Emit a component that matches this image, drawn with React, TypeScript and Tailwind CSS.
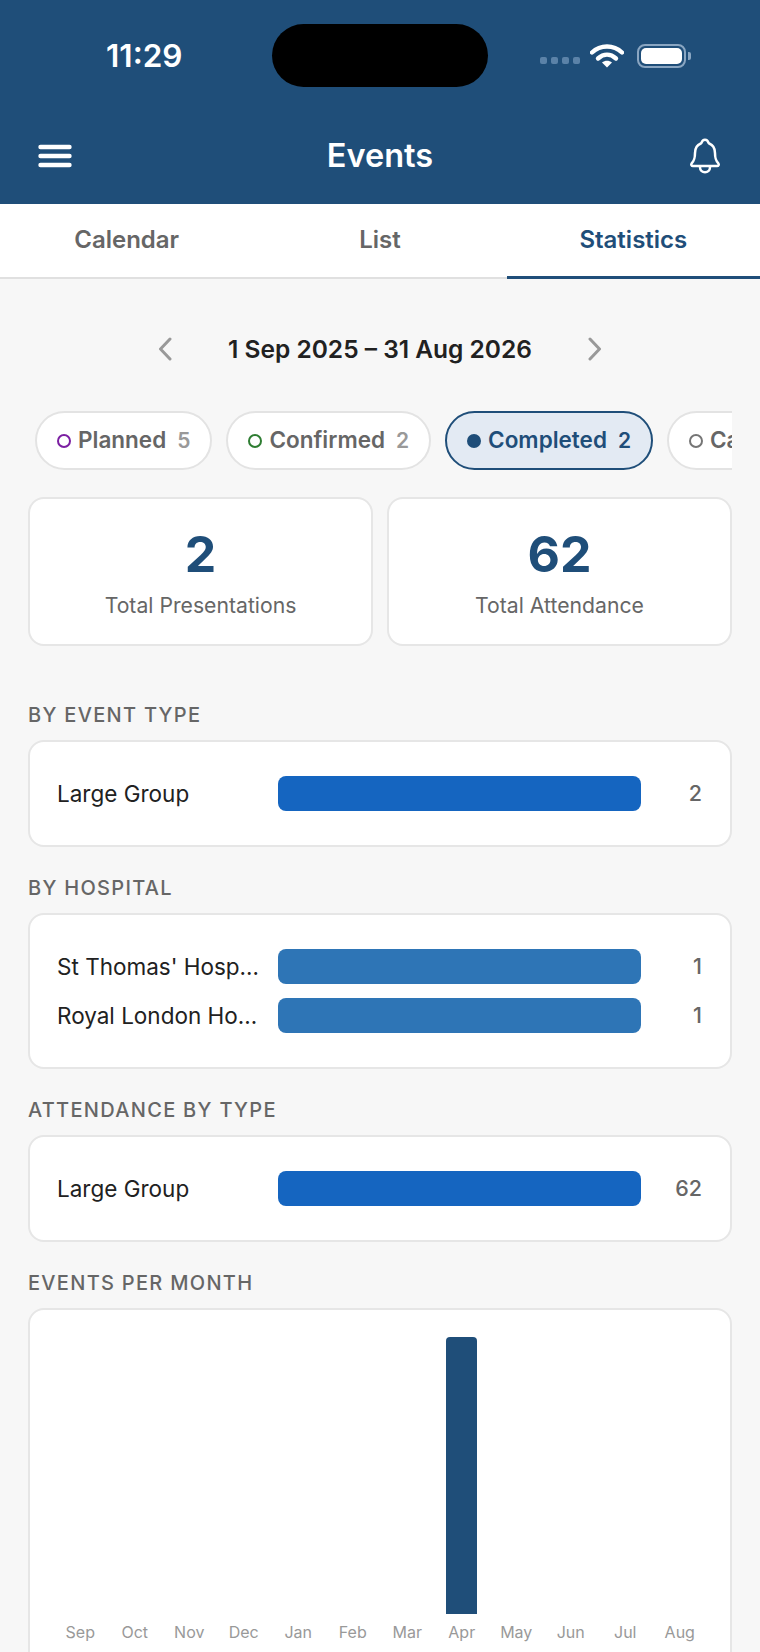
import { IoNotificationsOutline } from "react-icons/io5";

const NAVY = "#1f4e79";

const filters = [
  { label: "Planned", count: 5, ring: "border-[#7b1fa2]" },
  { label: "Confirmed", count: 2, ring: "border-[#2e7d32]" },
  { label: "Completed", count: 2, ring: "border-[#1f4e79] bg-[#1f4e79]", active: true },
  { label: "Cancelled", count: 0, ring: "border-[#757575]" },
];

const months = [
  { name: "Sep", count: 0 },
  { name: "Oct", count: 0 },
  { name: "Nov", count: 0 },
  { name: "Dec", count: 0 },
  { name: "Jan", count: 0 },
  { name: "Feb", count: 0 },
  { name: "Mar", count: 0 },
  { name: "Apr", count: 2 },
  { name: "May", count: 0 },
  { name: "Jun", count: 0 },
  { name: "Jul", count: 0 },
  { name: "Aug", count: 0 },
];

const StatusBar = () => (
  <div className="flex items-center h-[63px]">
    <span className="ml-[106px] w-[80px] text-[31.5px] font-semibold text-white leading-none">11:29</span>
    <div className="ml-[86px] w-[216px] h-[63px] rounded-[32px] bg-black" />
    <div className="ml-[52px] flex items-end gap-[1px] mb-[-10px]">
      {[0, 1, 2, 3].map((i) => (
        <span key={i} className="w-[7px] h-[7px] rounded-[2px] bg-[#5b82a8] mr-[3px]" />
      ))}
    </div>
    <svg className="ml-[7px]" width="34" height="25" viewBox="0 0 34 25" fill="none">
      <path d="M2 9.5C10.5 1.5 23.5 1.5 32 9.5" stroke="white" strokeWidth="4.4" strokeLinecap="round" />
      <path d="M8 15.5C13.5 10.5 20.5 10.5 26 15.5" stroke="white" strokeWidth="4.4" strokeLinecap="round" />
      <path d="M12 19.6C15 17 19 17 22 19.6L17 24.6Z" fill="white" />
    </svg>
    <div className="ml-[13px] w-[49px] h-[24px] rounded-[8px] border-2 border-[#8aa6c2] p-[2px]">
      <div className="w-full h-full rounded-[5px] bg-white" />
    </div>
    <div className="ml-[2px] w-[3px] h-[8px] rounded-r-[2px] bg-[#8aa6c2]" />
  </div>
);

const NavBar = () => (
  <div className="mt-[40px] h-[58px] px-[38px] flex items-center justify-between">
    <svg width="34" height="24" viewBox="0 0 34 24" fill="none">
      <path d="M2.5 3H31.5M2.5 12H31.5M2.5 21H31.5" stroke="white" strokeWidth="4.4" strokeLinecap="round" />
    </svg>
    <span className="text-[32.5px] font-semibold text-white leading-none">Events</span>
    <div className="w-[34px] flex justify-center">
      <IoNotificationsOutline className="text-white w-[40px] h-[40px] shrink-0" />
    </div>
  </div>
);

const Tabs = () => (
  <div className="flex h-[75px] bg-white border-b-[2px] border-[#e0e0e0]">
    {["Calendar", "List", "Statistics"].map((tab) => {
      const active = tab === "Statistics";
      return (
        <div
          key={tab}
          className={
            active
              ? "flex-1 flex items-center justify-center text-[24px] font-semibold text-[#1f4e79] border-b-[3px] border-[#1f4e79] mb-[-2px]"
              : "flex-1 flex items-center justify-center pb-[2px] text-[24px] font-semibold text-[#666666]"
          }
        >
          {tab}
        </div>
      );
    })}
  </div>
);

const Chevron = ({ flip }: { flip?: boolean }) => (
  <svg width="14" height="24" viewBox="0 0 14 24" fill="none" className={flip ? "rotate-180" : ""}>
    <path d="M12 2L2.5 12L12 22" stroke="#999999" strokeWidth="3" strokeLinecap="round" strokeLinejoin="round" />
  </svg>
);

const DateRange = () => (
  <div className="mt-[50px] h-[40px] flex items-center justify-center gap-[56px]">
    <Chevron />
    <span className="text-[24.5px] font-semibold text-[#212121] leading-none">1 Sep 2025 – 31 Aug 2026</span>
    <Chevron flip />
  </div>
);

const FilterPills = () => (
  <div className="mt-[42px] ml-[35px] w-[697px] flex gap-[14px] overflow-hidden">
    {filters.map((f) => (
      <div
        key={f.label}
        className={
          f.active
            ? "shrink-0 h-[59px] px-[20px] flex items-center rounded-[30px] border-2 border-[#1f4e79] bg-[#e3eaf3]"
            : "shrink-0 h-[59px] px-[20px] flex items-center rounded-[30px] border-2 border-[#e3e3e3] bg-white"
        }
      >
        <span className={`w-[14px] h-[14px] rounded-full border-2 ${f.ring}`} />
        <span
          className={
            f.active
              ? "ml-[7px] text-[22.5px] font-semibold text-[#1f4e79] leading-none"
              : "ml-[7px] text-[22.5px] font-semibold text-[#666666] leading-none"
          }
        >
          {f.label}
        </span>
        <span
          className={
            f.active
              ? "ml-[11px] text-[21px] font-semibold text-[#1f4e79] leading-none"
              : "ml-[11px] text-[21px] font-semibold text-[#999999] leading-none"
          }
        >
          {f.count}
        </span>
      </div>
    ))}
  </div>
);

const StatCard = ({ value, label }: { value: string; label: string }) => (
  <div className="flex-1 h-[149px] bg-white rounded-[16px] border-2 border-[#e6e6e6] flex flex-col items-center">
    <span className="mt-[28px] text-[50px] font-bold leading-[54px] text-[#1f4e79]">{value}</span>
    <span className="mt-[10px] text-[21.2px] font-normal leading-[28px] text-[#666666]">{label}</span>
  </div>
);

const SectionTitle = ({ children, top }: { children: string; top: string }) => (
  <h2 className={`${top} mb-[11px] h-[28px] flex items-center text-[20px] font-medium tracking-[1.3px] text-[#666666]`}>
    {children}
  </h2>
);

const BarRow = ({ label, value, color }: { label: string; value: number; color: string }) => (
  <div className="flex items-center h-[35px]">
    <span className="w-[221px] pr-[15px] truncate text-[22.5px] font-normal text-[#212121]">{label}</span>
    <div className={`w-[363px] h-[35px] rounded-[8px] ${color}`} />
    <span className="flex-1 text-right text-[21.5px] font-medium text-[#666666]">{value}</span>
  </div>
);

const BarCard = ({ children }: { children: React.ReactNode }) => (
  <div className="bg-white rounded-[16px] border-2 border-[#e6e6e6] pl-[27px] pr-[28px] py-[34px] flex flex-col gap-[14px]">
    {children}
  </div>
);

const MonthChart = () => (
  <div className="bg-white rounded-[16px] border-2 border-[#e6e6e6] px-[23px] pt-[27px] pb-[40px] grid grid-cols-12">
    {months.map((m) => (
      <div key={m.name} className="flex flex-col items-center">
        <div className="h-[277px] flex items-end">
          {m.count > 0 && <div className="w-[31px] h-[277px] rounded-t-[4px] bg-[#1f4e79]" />}
        </div>
        <span className="mt-[6px] text-[16px] leading-[24px] text-[#999999]">{m.name}</span>
      </div>
    ))}
  </div>
);

export default function App() {
  return (
    <div className="w-[760px] h-[1652px] overflow-hidden bg-[#f7f7f7] font-['Inter',sans-serif]">
      <header className="h-[204px] pt-[24px]" style={{ backgroundColor: NAVY }}>
        <StatusBar />
        <NavBar />
      </header>
      <Tabs />
      <DateRange />
      <FilterPills />
      <div className="mx-[28px]">
        <div className="mt-[27px] flex gap-[14px]">
          <StatCard value="2" label="Total Presentations" />
          <StatCard value="62" label="Total Attendance" />
        </div>
        <SectionTitle top="mt-[55px]">BY EVENT TYPE</SectionTitle>
        <BarCard>
          <BarRow label="Large Group" value={2} color="bg-[#1565c0]" />
        </BarCard>
        <SectionTitle top="mt-[27px]">BY HOSPITAL</SectionTitle>
        <BarCard>
          <BarRow label="St Thomas' Hospital" value={1} color="bg-[#2e75b6]" />
          <BarRow label="Royal London Hospital" value={1} color="bg-[#2e75b6]" />
        </BarCard>
        <SectionTitle top="mt-[27px]">ATTENDANCE BY TYPE</SectionTitle>
        <BarCard>
          <BarRow label="Large Group" value={62} color="bg-[#1565c0]" />
        </BarCard>
        <SectionTitle top="mt-[27px]">EVENTS PER MONTH</SectionTitle>
        <MonthChart />
      </div>
    </div>
  );
}
